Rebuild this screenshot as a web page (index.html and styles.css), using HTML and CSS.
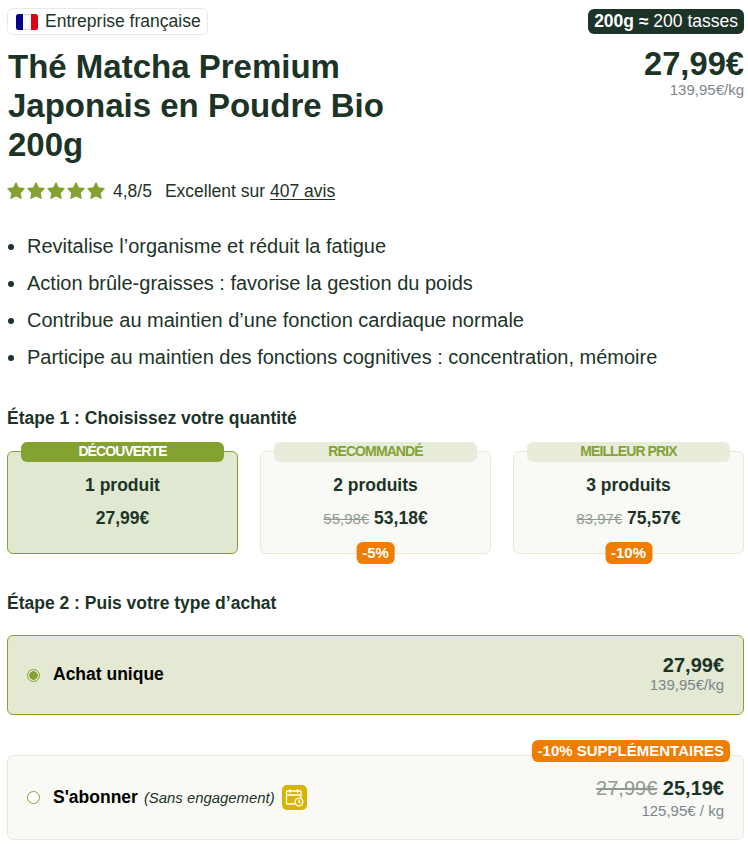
FILE: index.html
```html
<!DOCTYPE html>
<html lang="fr">
<head>
    <meta charset="UTF-8">
    <meta name="viewport" content="width=device-width, initial-scale=1.0">
    <title>Thé Matcha Premium Japonais en Poudre Bio 200g</title>
    <link rel="stylesheet" href="styles.css">
</head>
<body>
<svg class="sprite" width="0" height="0">
    <symbol id="star" viewBox="0 0 18 18">
        <path d="M9 1l2.400 5 5.600.8-4 3.900 1 5.500-5-2.600-5 2.600 1-5.500-4-3.900 5.600-.8z" stroke-width="1.400" stroke-linejoin="round"/>
    </symbol>
</svg>

<div class="product">
    <div class="top">
        <div class="origin">
            <svg class="flag" width="22" height="16" viewBox="0 0 22 16">
                <rect x="0.500" y="0.500" width="21" height="15" rx="2.500" fill="#fff" stroke="#ddd"/>
                <path d="M7 0H2.500A2.500 2.500 0 0 0 0 2.500v11A2.500 2.500 0 0 0 2.500 16H7z" fill="#00008f"/>
                <path d="M15 0h4.500A2.500 2.500 0 0 1 22 2.500v11a2.500 2.500 0 0 1-2.500 2.500H15z" fill="#e1000f"/>
            </svg>
            <span>Entreprise française</span>
        </div>
        <div class="cups"><b>200g ≈</b> 200 tasses</div>
    </div>

    <div class="heading">
        <h1>Thé Matcha Premium Japonais en Poudre Bio 200g</h1>
        <div class="price">
            <div class="amount">27,99€</div>
            <div class="unit">139,95€/kg</div>
        </div>
    </div>

    <div class="rating">
        <div class="stars">
            <svg><use href="#star"/></svg>
            <svg><use href="#star"/></svg>
            <svg><use href="#star"/></svg>
            <svg><use href="#star"/></svg>
            <svg><use href="#star"/></svg>
        </div>
        <span class="score">4,8/5</span>
        <span>Excellent sur <a href="#">407 avis</a></span>
    </div>

    <ul class="benefits">
        <li>Revitalise l’organisme et réduit la fatigue</li>
        <li>Action brûle-graisses : favorise la gestion du poids</li>
        <li>Contribue au maintien d’une fonction cardiaque normale</li>
        <li>Participe au maintien des fonctions cognitives : concentration, mémoire</li>
    </ul>

    <h2>Étape 1 : Choisissez votre quantité</h2>
    <div class="packs">
        <div class="pack selected">
            <div class="label">DÉCOUVERTE</div>
            <div class="name">1 produit</div>
            <div class="cost">27,99€</div>
        </div>
        <div class="pack">
            <div class="label">RECOMMANDÉ</div>
            <div class="name">2 produits</div>
            <div class="cost"><s>55,98€</s> 53,18€</div>
            <div class="discount">-5%</div>
        </div>
        <div class="pack">
            <div class="label">MEILLEUR PRIX</div>
            <div class="name">3 produits</div>
            <div class="cost"><s>83,97€</s> 75,57€</div>
            <div class="discount">-10%</div>
        </div>
    </div>

    <h2>Étape 2 : Puis votre type d’achat</h2>
    <div class="option selected">
        <span class="radio"></span>
        <span class="title">Achat unique</span>
        <div class="total">
            <div class="amount">27,99€</div>
            <div class="unit">139,95€/kg</div>
        </div>
    </div>
    <div class="option subscribe">
        <div class="extra">-10% SUPPLÉMENTAIRES</div>
        <span class="radio"></span>
        <span class="title">S'abonner</span>
        <i class="note">(Sans engagement)</i>
        <span class="calendar">
            <svg width="19" height="19" viewBox="0 0 19 19" fill="none" stroke="#fff" stroke-width="1.300">
                <path d="M10.500 16H2.500a1 1 0 0 1-1-1V4a1 1 0 0 1 1-1h12.500a1 1 0 0 1 1 1v6M1.500 7H16M5 1v4M12.500 1v4"/>
                <circle cx="14" cy="14" r="3.800"/>
                <path d="M14 11.800V14l1.500 1.200"/>
            </svg>
        </span>
        <div class="total">
            <div class="amount"><s>27,99€</s> 25,19€</div>
            <div class="unit">125,95€ / kg</div>
        </div>
    </div>
</div>
</body>
</html>
```
FILE: styles.css
```css
* {
    box-sizing: border-box;
}

body {
    margin: 0;
    background-color: #fff;
    font-family: "Liberation Sans", Arial, sans-serif;
    font-size: 17.5px;
    line-height: 20px;
    color: #1c3427;
}

.sprite {
    position: absolute;
}

.product {
    padding: 8px 4px 0 7px;
}

.top {
    display: flex;
    justify-content: space-between;
    align-items: flex-start;
}

.origin {
    display: flex;
    align-items: center;
    gap: 7px;
    height: 27px;
    padding: 0 6px 1px 8px;
    border: 1px solid #e9e9e9;
    border-radius: 6px;
}

.flag {
    margin-top: 2px;
}

.cups {
    height: 25px;
    margin-top: 1px;
    padding: 2px 6px;
    border-radius: 6px;
    background-color: #1c3427;
    color: #fff;
}

.heading {
    display: flex;
    justify-content: space-between;
    margin-top: 12px;
}

h1 {
    width: 400px;
    margin: 0;
    padding-left: 1px;
    font-size: 33px;
    line-height: 39px;
}

.price {
    text-align: right;
}

.price .amount {
    padding-top: 1px;
    font-size: 32.7px;
    font-weight: bold;
    line-height: 32px;
}

.unit {
    font-size: 15px;
    line-height: 20px;
    color: #7b868c;
}

.rating {
    display: flex;
    align-items: center;
    height: 20px;
    margin-top: 17px;
}

.stars {
    display: flex;
    gap: 2px;
}

.stars svg {
    width: 18px;
    height: 18px;
    fill: #84a232;
    stroke: #84a232;
}

.score {
    margin: 0 13px 0 8px;
}

.rating a {
    color: inherit;
    text-underline-offset: 2px;
}

.benefits {
    margin: 33px 0 0;
    padding-left: 20px;
    font-size: 20px;
    line-height: 24px;
}

.benefits li {
    margin-bottom: 13px;
}

h2 {
    margin: 0;
    font-size: 17.5px;
    line-height: 20px;
}

.benefits + h2 {
    margin-top: 39px;
}

.packs {
    display: grid;
    grid-template-columns: repeat(3, 1fr);
    gap: 22px;
    margin: 23px 0 39px;
}

.pack {
    position: relative;
    height: 103px;
    padding-top: 23px;
    border: 1px solid #e6ebd8;
    border-radius: 6px;
    background-color: #f9faf5;
    text-align: center;
    font-weight: bold;
}

.pack.selected {
    border-color: #84a232;
    background-color: #e0e8d1;
}

.label {
    position: absolute;
    top: -10px;
    left: 13px;
    right: 13px;
    height: 20px;
    border-radius: 6px;
    background-color: #e7edda;
    color: #84a232;
    font-size: 14px;
    line-height: 19px;
    letter-spacing: -0.9px;
}

.selected .label {
    background-color: #84a232;
    color: #fff;
}

.name {
    margin-bottom: 13px;
}

s {
    font-weight: normal;
    color: #8e9a90;
}

.cost s {
    font-size: 15px;
}

.discount,
.extra {
    position: absolute;
    height: 22px;
    padding: 0 6px;
    border-radius: 6px;
    background-color: #f07d00;
    color: #fff;
    font-size: 15px;
    font-weight: bold;
    line-height: 22px;
}

.discount {
    bottom: -11px;
    left: 50%;
    transform: translateX(-50%);
}

.option {
    position: relative;
    display: flex;
    align-items: center;
    height: 80px;
    margin-top: 22px;
    padding: 0 19px;
    border: 1px solid #e9ebe2;
    border-radius: 6px;
    background-color: #f9faf5;
}

.option.selected {
    border-color: #84a232;
    background-color: #e3e9d2;
}

.subscribe {
    height: 85px;
    margin-top: 40px;
}

.extra {
    top: -16px;
    right: 13px;
}

.radio {
    width: 13px;
    height: 13px;
    margin-right: 13px;
    border: 1px solid #84a232;
    border-radius: 50%;
    background-color: #fff;
}

.selected .radio {
    background: radial-gradient(circle, #84a232 4px, transparent 4.500px);
}

.title {
    margin: 0 6px 2px 0;
    color: #000;
    font-weight: bold;
}

.note {
    font-size: 14.9px;
}

.calendar {
    display: flex;
    align-items: center;
    justify-content: center;
    width: 25px;
    height: 25px;
    margin-left: 7px;
    border-radius: 5px;
    background-color: #d6b500;
}

.total {
    margin-left: auto;
    text-align: right;
}

.total .amount {
    font-size: 20px;
    font-weight: bold;
}

.subscribe .amount {
    margin: 3px 0;
}
```
